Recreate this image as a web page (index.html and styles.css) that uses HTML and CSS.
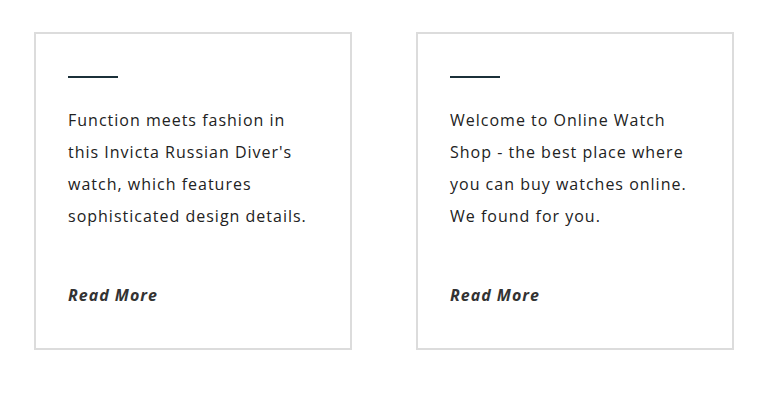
FILE: index.html
```html
<!DOCTYPE html>
<html>
<head>
<meta charset="utf-8">
<link rel="stylesheet" href="styles.css">
</head>
<body>
<div class="cards">
  <div class="card">
    <div class="rule"></div>
    <p class="text">Function meets fashion in this Invicta Russian Diver's watch, which features sophisticated design details.</p>
    <a class="more">Read More</a>
  </div>
  <div class="card">
    <div class="rule"></div>
    <p class="text">Welcome to Online Watch Shop - the best place where you can buy watches online. We found for you.</p>
    <a class="more">Read More</a>
  </div>
</div>
</body>
</html>
```
FILE: styles.css
```css
html, body {
  margin: 0;
  padding: 0;
  background: #fff;
}
.cards {
  display: flex;
  gap: 64px;
  padding: 32px 0 0 34px;
}
.card {
  width: 318px;
  height: 318px;
  box-sizing: border-box;
  border: 2px solid #dcdcdc;
  padding: 42px 32px 0 32px;
  display: flex;
  flex-direction: column;
  font-family: "Open Sans", sans-serif;
}
.rule {
  width: 50px;
  height: 2px;
  background: #1b3039;
}
.text {
  margin: 26px 0 0 0;
  font-size: 16px;
  line-height: 32px;
  letter-spacing: 1px;
  color: #222;
}
.more {
  margin-top: 47px;
  font-size: 16px;
  line-height: 32px;
  font-weight: 700;
  font-style: italic;
  letter-spacing: 1px;
  color: #333;
}
```
